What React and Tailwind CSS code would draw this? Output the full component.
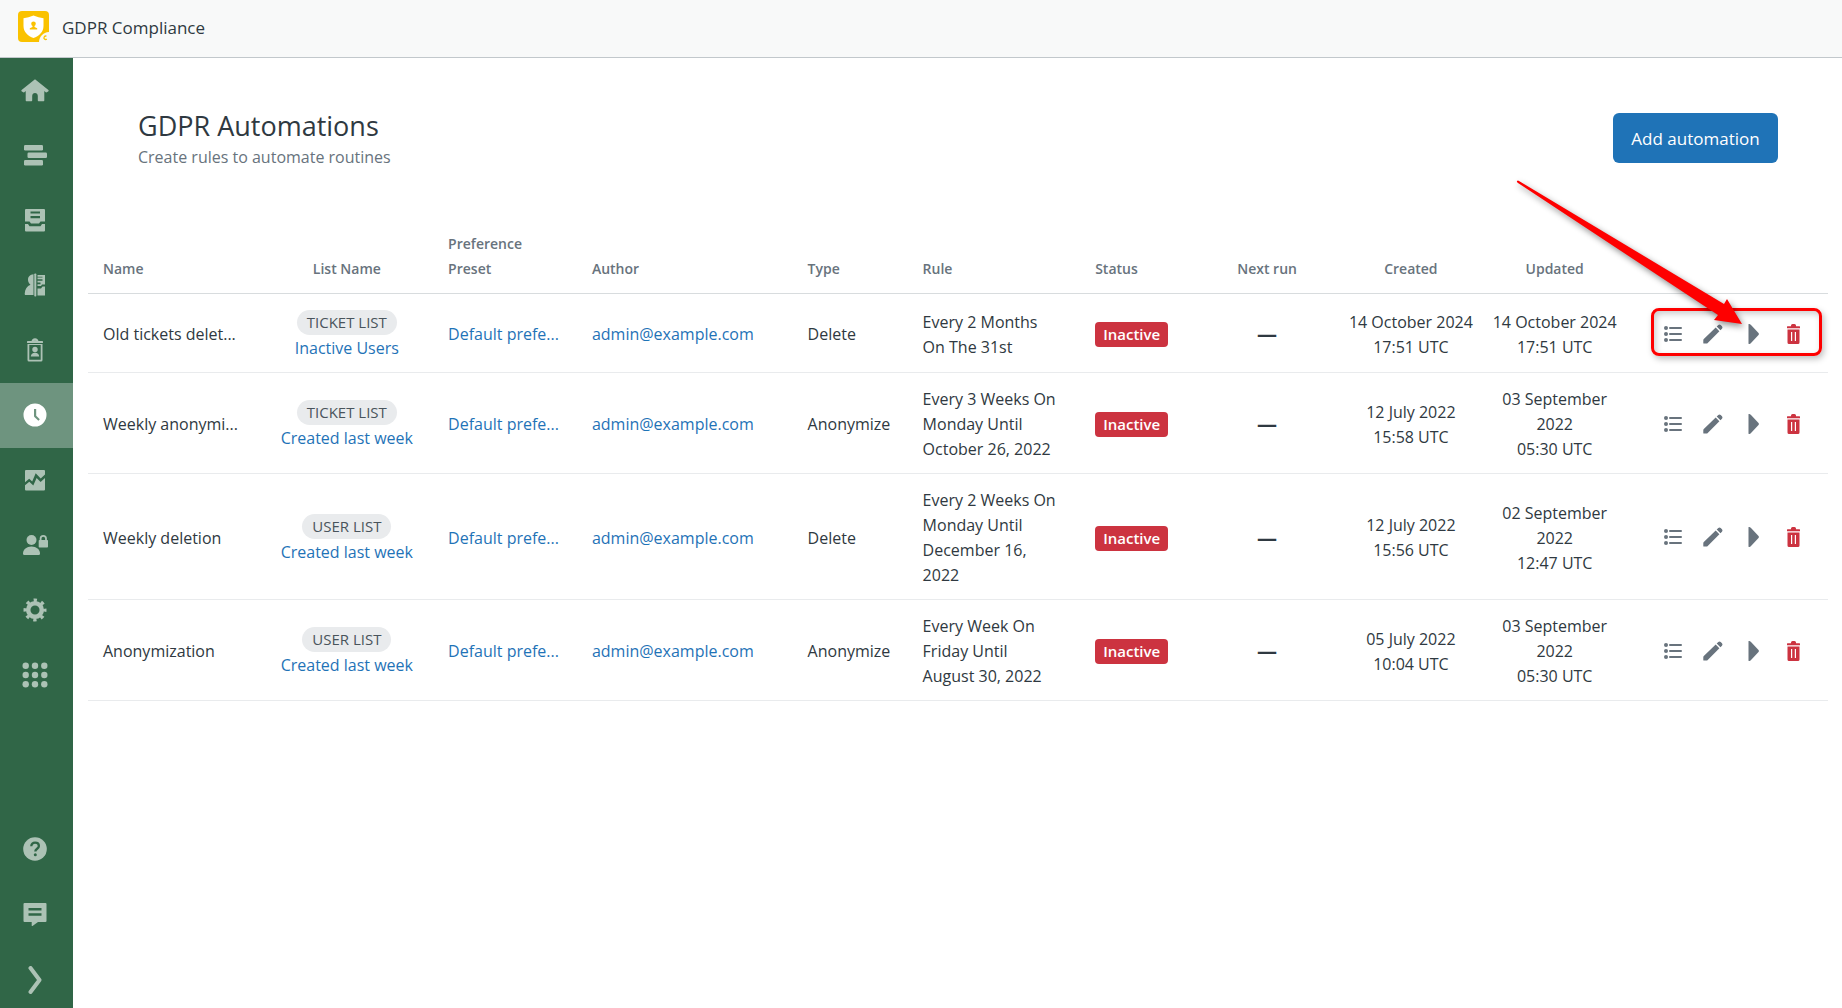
import React from 'react'

const navItems = [
  {
    label: 'Home',
    icon: (
      <path d="M14 3.2 27.4 14c.6.5.2 1.2-.3 1.5l-1.3.8c-.4.2-.8.1-1.1-.1L23.3 15v9.3c0 .6-.4 1-1 1h-4.500c-.6 0-1-.4-1-1V20c0-1.600-1.200-2.900-2.800-2.900S11.200 18.400 11.200 20v4.300c0 .6-.4 1-1 1H5.700c-.6 0-1-.4-1-1V15l-1.400 1.200c-.3.2-.7.3-1.100.1l-1.300-.8c-.5-.3-.9-1-.3-1.500z" />
    ),
  },
  {
    label: 'Views',
    icon: (
      <>
        <rect x="3" y="4" width="19" height="5.5" rx="1.2" />
        <rect x="6.5" y="11.5" width="19.5" height="5.5" rx="1.2" />
        <rect x="3" y="19" width="19" height="5.5" rx="1.2" />
      </>
    ),
  },
  {
    label: 'Tickets',
    icon: (
      <>
        <path
          fillRule="evenodd"
          d="M5 3h18q1 0 1 1v11.5h-4.5l-1.5 2h-8l-1.5-2H4V4q0-1 1-1zm4.500 2.500v2h9.500v-2zm0 4.500v2.200h9.500V10z"
        />
        <path d="M4 18h3l1.5 2.3h11L21 18h3v6.500q0 1-1 1H5q-1 0-1-1z" />
      </>
    ),
  },
  {
    label: 'Users',
    icon: (
      <>
        <path d="M12.5 3.3C9.200 3.500 7 5.700 7 8.800c0 2.100 1 3.700 2.500 4.900C6 14.900 4 18 3.700 22.800c0 .8.3 1.300 1 1.300h7.800z" />
        <rect x="13.3" y="2.5" width="2" height="23" rx=".8" />
        <path d="M16.5 4H24v9.5h-3L20 15h-3.500v-1.800h3V11.500h-3V9.800h5V8.200h-5V6.500h5V5.800h-5z" />
        <path d="M16.5 17.5H20l1.500-2H24v9h-7.500z" />
      </>
    ),
  },
  {
    label: 'Audit',
    icon: (
      <>
        <path fillRule="evenodd" d="M6.5 8h15v16q0 1.500-1.500 1.500H8q-1.500 0-1.500-1.500zm1.800 1v14.700h11.400V9z" />
        <rect x="6" y="5" width="16" height="2" rx=".6" />
        <path d="M10.5 5.5c0-2 1.500-3.300 3.500-3.300s3.500 1.300 3.500 3.300h-2q-1.500-1.500-3 0z" />
        <circle cx="14" cy="13.5" r="2.7" />
        <path d="M9.8 20.5c0-2.300 1.800-3.800 4.200-3.800s4.200 1.500 4.200 3.800z" />
      </>
    ),
  },
  {
    label: 'Automations',
    active: true,
    icon: (
      <path
        fillRule="evenodd"
        d="M14 2.5a11.500 11.500 0 1 1 0 23 11.500 11.500 0 0 1 0-23zM13 8v7q0 .5.400.9l4 3.800 1.400-1.500-3.600-3.500V8z"
      />
    ),
  },
  {
    label: 'Reports',
    icon: (
      <>
        <path d="M5 4h18q1 0 1 1v3.500l-4.300 4-5-5.200-3.500 8.200-3-2.800L4 16.200V5q0-1 1-1z" />
        <path d="m4 19.300 4.300-3.600 4 3.800 3.300-7.500 4 4L24 12v11.500q0 1-1 1H5q-1 0-1-1z" />
      </>
    ),
  },
  {
    label: 'Permissions',
    icon: (
      <>
        <circle cx="10.5" cy="9" r="5" />
        <path d="M2 22.500c0-4 3.700-7 8.500-7s8.500 3 8.500 7q0 1.500-1.200 1.500H3.200Q2 24 2 22.500z" />
        <path
          fillRule="evenodd"
          d="M18.700 9V7.500a3.600 3.600 0 0 1 7.200 0V9h.3q.8 0 .8.800v6q0 .8-.8.800h-7.700q-.8 0-.8-.8v-6q0-.8.8-.8zm1.800 0h3.600V7.500a1.800 1.800 0 0 0-3.600 0z"
        />
      </>
    ),
  },
  {
    label: 'Settings',
    icon: (
      <>
        <circle cx="14" cy="14" r="6.8" fill="none" stroke="currentColor" strokeWidth="4.5" />
        <circle
          cx="14"
          cy="14"
          r="9.8"
          fill="none"
          stroke="currentColor"
          strokeWidth="3.4"
          strokeDasharray="3.3 4.397"
          strokeDashoffset="1.65"
        />
      </>
    ),
  },
  {
    label: 'Apps',
    icon: [4.7, 14, 23.3].map((cy) =>
      [4.7, 14, 23.3].map((cx) => <circle key={`${cx}-${cy}`} cx={cx} cy={cy} r="3.2" />)
    ),
  },
]

const footerItems = [
  {
    label: 'Help',
    icon: (
      <>
        <circle cx="14" cy="14" r="11.8" />
        <path
          d="M10.3 11.300c0-2.300 1.600-3.600 3.800-3.600s3.800 1.300 3.800 3.300c0 2.800-3.600 2.700-3.600 5.600"
          fill="none"
          stroke="#306647"
          strokeWidth="2.3"
        />
        <circle cx="14.3" cy="19.8" r="1.5" fill="#306647" />
      </>
    ),
  },
  {
    label: 'Feedback',
    icon: (
      <path
        fillRule="evenodd"
        d="M3.500 3h21q1 0 1 1v17q0 1-1 1H17l-5.500 4q-.8.300-.8-.5V22H3.500q-1 0-1-1V4q0-1 1-1zM7.500 8v2.500h13V8zm0 5.200v2.500h13v-2.500z"
      />
    ),
  },
  {
    label: 'Expand',
    last: true,
    icon: (
      <path
        d="m9.500 2 9 12-9 12"
        fill="none"
        stroke="currentColor"
        strokeWidth="4"
        strokeLinecap="round"
        strokeLinejoin="round"
      />
    ),
  },
]

const automations = [
  {
    name: 'Old tickets delet...',
    listType: 'Ticket list',
    listName: 'Inactive Users',
    type: 'Delete',
    rule: 'Every 2 Months On The 31st',
    created: ['14 October 2024', '17:51 UTC'],
    updated: ['14 October 2024', '17:51 UTC'],
    highlighted: true,
  },
  {
    name: 'Weekly anonymi...',
    listType: 'Ticket list',
    listName: 'Created last week',
    type: 'Anonymize',
    rule: 'Every 3 Weeks On Monday Until October 26, 2022',
    created: ['12 July 2022', '15:58 UTC'],
    updated: ['03 September 2022', '05:30 UTC'],
  },
  {
    name: 'Weekly deletion',
    listType: 'User list',
    listName: 'Created last week',
    type: 'Delete',
    rule: 'Every 2 Weeks On Monday Until December 16, 2022',
    created: ['12 July 2022', '15:56 UTC'],
    updated: ['02 September 2022', '12:47 UTC'],
  },
  {
    name: 'Anonymization',
    listType: 'User list',
    listName: 'Created last week',
    type: 'Anonymize',
    rule: 'Every Week On Friday Until August 30, 2022',
    created: ['05 July 2022', '10:04 UTC'],
    updated: ['03 September 2022', '05:30 UTC'],
  },
]

function NavButton({ item }) {
  return (
    <button
      type="button"
      aria-label={item.label}
      className={`flex w-full items-center justify-center pr-1 ${
        item.active ? 'bg-[#6e947f] text-white' : 'text-[#acc2b5]'
      } ${item.last ? 'h-[61px] pt-1' : 'h-[65px] pb-0.5'}`}
    >
      <svg viewBox="0 0 28 28" className="size-7" fill="currentColor">
        {item.icon}
      </svg>
    </button>
  )
}

function IconButton({ label, danger, children }) {
  return (
    <button type="button" aria-label={label} className={danger ? 'text-[#cc3340]' : 'text-[#68737d]'}>
      <svg viewBox="0 0 20 20" className="size-5" fill="currentColor">
        {children}
      </svg>
    </button>
  )
}

function Highlight() {
  return (
    <>
      <div className="pointer-events-none absolute top-3.5 right-1.5 h-12 w-[171px] rounded-lg border-3 border-[#fe0000] shadow-[2px_3px_6px_rgba(0,0,0,0.25),inset_2px_3px_6px_rgba(0,0,0,0.2)]" />
      <svg
        viewBox="0 0 240 160"
        className="pointer-events-none absolute -top-[118px] right-[78px] h-40 w-60 overflow-visible drop-shadow-[2px_3px_3px_rgba(0,0,0,0.45)]"
        fill="#fe0000"
      >
        <path d="M7 5q1-.8 2 0L214 128l3-5 15 25-28-4 4-5L8 7q-1.500-1-1-2z" />
      </svg>
    </>
  )
}

function Row({ item }) {
  return (
    <tr className="border-b border-[#e9ebed]">
      <td className="pt-3.5 pb-[11px] pl-[15px] whitespace-nowrap">{item.name}</td>
      <td className="px-1 pt-[13px] pb-[11px] text-center">
        <div className="flex h-[29px] items-end justify-center pb-px">
          <span className="rounded-full bg-[#e9ebed] px-2.5 text-[15px] leading-[25px] text-[#49545c] uppercase">
            {item.listType}
          </span>
        </div>
        <a href="#" className="text-[#1f73b7]">{item.listName}</a>
      </td>
      <td className="pt-3.5 pb-[11px] pl-[15px] whitespace-nowrap">
        <a href="#" className="text-[#1f73b7]">Default prefe...</a>
      </td>
      <td className="px-[15px] pt-3.5 pb-[11px]">
        <a href="#" className="text-[#1f73b7]">admin@example.com</a>
      </td>
      <td className="pt-3.5 pb-[11px] pl-[15px]">{item.type}</td>
      <td className="pt-3.5 pr-5 pb-[11px] pl-[15px]">{item.rule}</td>
      <td className="px-[15px] pt-3.5 pb-[11px]">
        <span className="block w-[73px] rounded bg-[#cc3340] text-center text-[15px] leading-[25px] font-semibold text-white">
          Inactive
        </span>
      </td>
      <td className="px-[15px] pt-[13px] pb-3 text-center text-[20px] leading-[25px] font-bold">—</td>
      <td className="px-1.5 pt-3.5 pb-[11px] text-center">
        {item.created[0]}
        <br />
        {item.created[1]}
      </td>
      <td className="px-1.5 pt-3.5 pb-[11px] text-center">
        {item.updated[0]}
        <br />
        {item.updated[1]}
      </td>
      <td className="relative pt-[13px] pr-[25px] pb-3">
        <div className="flex items-center justify-end gap-5">
          <IconButton label="Show runs">
            <circle cx="3" cy="4" r="2" />
            <circle cx="3" cy="10" r="2" />
            <circle cx="3" cy="16" r="2" />
            <rect x="6" y="3" width="13" height="2" rx="1" />
            <rect x="6" y="9" width="13" height="2" rx="1" />
            <rect x="6" y="15" width="13" height="2" rx="1" />
          </IconButton>
          <IconButton label="Edit">
            <path d="M12.700 3.600 16.400 7.300 4.700 19q-.5.500-1.200.5H.8q-.5 0-.5-.5v-2.700q0-.7.500-1.200zM13.700 2.600 15.300 1q1.200-1 2.400 0L19 2.300q1 1.200 0 2.400l-1.600 1.600z" />
          </IconButton>
          <IconButton label="Run">
            <path d="M5.500.5q0-1 1-.4 1 .3 1.500.9l7.500 8q.8 1 0 2L8 19q-.8.900-1.500 1-1 .3-1-.7z" />
          </IconButton>
          <IconButton label="Delete" danger>
            <path
              fillRule="evenodd"
              d="M8 1.500Q8 0 9.500 0h2Q13 0 13 1.500v.7h3.500q.5 0 .5.500v1.500H4V2.700q0-.5.500-.5H8zM4.500 5.500h12v13q0 1.500-1.500 1.500H6q-1.500 0-1.500-1.500zM8 8v9h1.200V8zm3.800 0v9H13V8z"
            />
          </IconButton>
        </div>
        {item.highlighted && <Highlight />}
      </td>
    </tr>
  )
}

export default function App() {
  return (
    <div className="flex min-h-screen flex-col bg-white font-['Open_Sans',sans-serif] text-[16px] leading-[25px] text-[#2f3941]">
      <header className="flex h-[58px] items-center gap-[13px] border-b border-[#c2c8cc] bg-[#f8f9f9] pr-4 pb-1 pl-[18px]">
        <svg viewBox="0 0 31 31" className="size-[31px]">
          <rect width="31" height="31" rx="4" fill="#fac200" />
          <path
            d="M15.500 4.500q5 2 10 2.800V15c0 6-4.500 10-10 12C10 25 5.500 21 5.500 15V7.300q5-.8 10-2.800z"
            fill="#fff"
          />
          <circle cx="15.5" cy="12.7" r="2.3" fill="#fac200" />
          <path d="M14.500 14h2v2l2.700 1.200V18.500h-7.400v-1.300l2.700-1.200z" fill="#fac200" />
          <path d="M21 31c0-5 4-9.500 10-10v10z" fill="#f8f9f9" />
          <path d="M28.500 25.300a1.700 1.700 0 1 0 .3 2.700" fill="none" stroke="#fac200" strokeWidth="1.3" />
        </svg>
        <span className="pt-0.5 text-[17px] font-medium">GDPR Compliance</span>
      </header>

      <div className="flex flex-1">
        <nav className="flex w-[73px] shrink-0 flex-col justify-between bg-[#306647]">
          <div>
            {navItems.map((item) => (
              <NavButton key={item.label} item={item} />
            ))}
          </div>
          <div>
            {footerItems.map((item) => (
              <NavButton key={item.label} item={item} />
            ))}
          </div>
        </nav>

        <main className="min-w-0 flex-1 pr-3.5 pl-[15px]">
          <div className="flex items-start justify-between px-[50px] pt-[53px] pb-[49px]">
            <div>
              <h1 className="text-[27px] leading-[30px] font-medium">GDPR Automations</h1>
              <p className="mt-1 text-[#68737d]">Create rules to automate routines</p>
            </div>
            <button type="button" className="mt-0.5 h-[50px] w-[165px] rounded-md bg-[#1f73b7] text-[17px] text-white">
              Add automation
            </button>
          </div>

          <table className="w-full table-fixed border-collapse text-left">
            <colgroup>
              <col className="w-[120px]" />
              <col className="w-[120px]" />
              <col className="w-[100px]" />
              <col className="w-[150px]" />
              <col className="w-[80px]" />
              <col className="w-[120px]" />
              <col className="w-[80px]" />
              <col className="w-[100px]" />
              <col className="w-[100px]" />
              <col className="w-[100px]" />
              <col className="w-[140px]" />
            </colgroup>
            <thead>
              <tr className="border-b border-[#d8dcde] align-bottom text-[14px] text-[#68737d]">
                <th className="px-[15px] py-3 font-semibold">Name</th>
                <th className="px-[15px] py-3 text-center font-semibold">List Name</th>
                <th className="px-[15px] py-3 font-semibold">Preference Preset</th>
                <th className="px-[15px] py-3 font-semibold">Author</th>
                <th className="px-[15px] py-3 font-semibold">Type</th>
                <th className="px-[15px] py-3 font-semibold">Rule</th>
                <th className="px-[15px] py-3 font-semibold">Status</th>
                <th className="px-[15px] py-3 text-center font-semibold">Next run</th>
                <th className="px-[15px] py-3 text-center font-semibold">Created</th>
                <th className="px-[15px] py-3 text-center font-semibold">Updated</th>
                <th className="px-[15px] py-3" aria-label="Actions" />
              </tr>
            </thead>
            <tbody>
              {automations.map((item) => (
                <Row key={item.name} item={item} />
              ))}
            </tbody>
          </table>
        </main>
      </div>
    </div>
  )
}
